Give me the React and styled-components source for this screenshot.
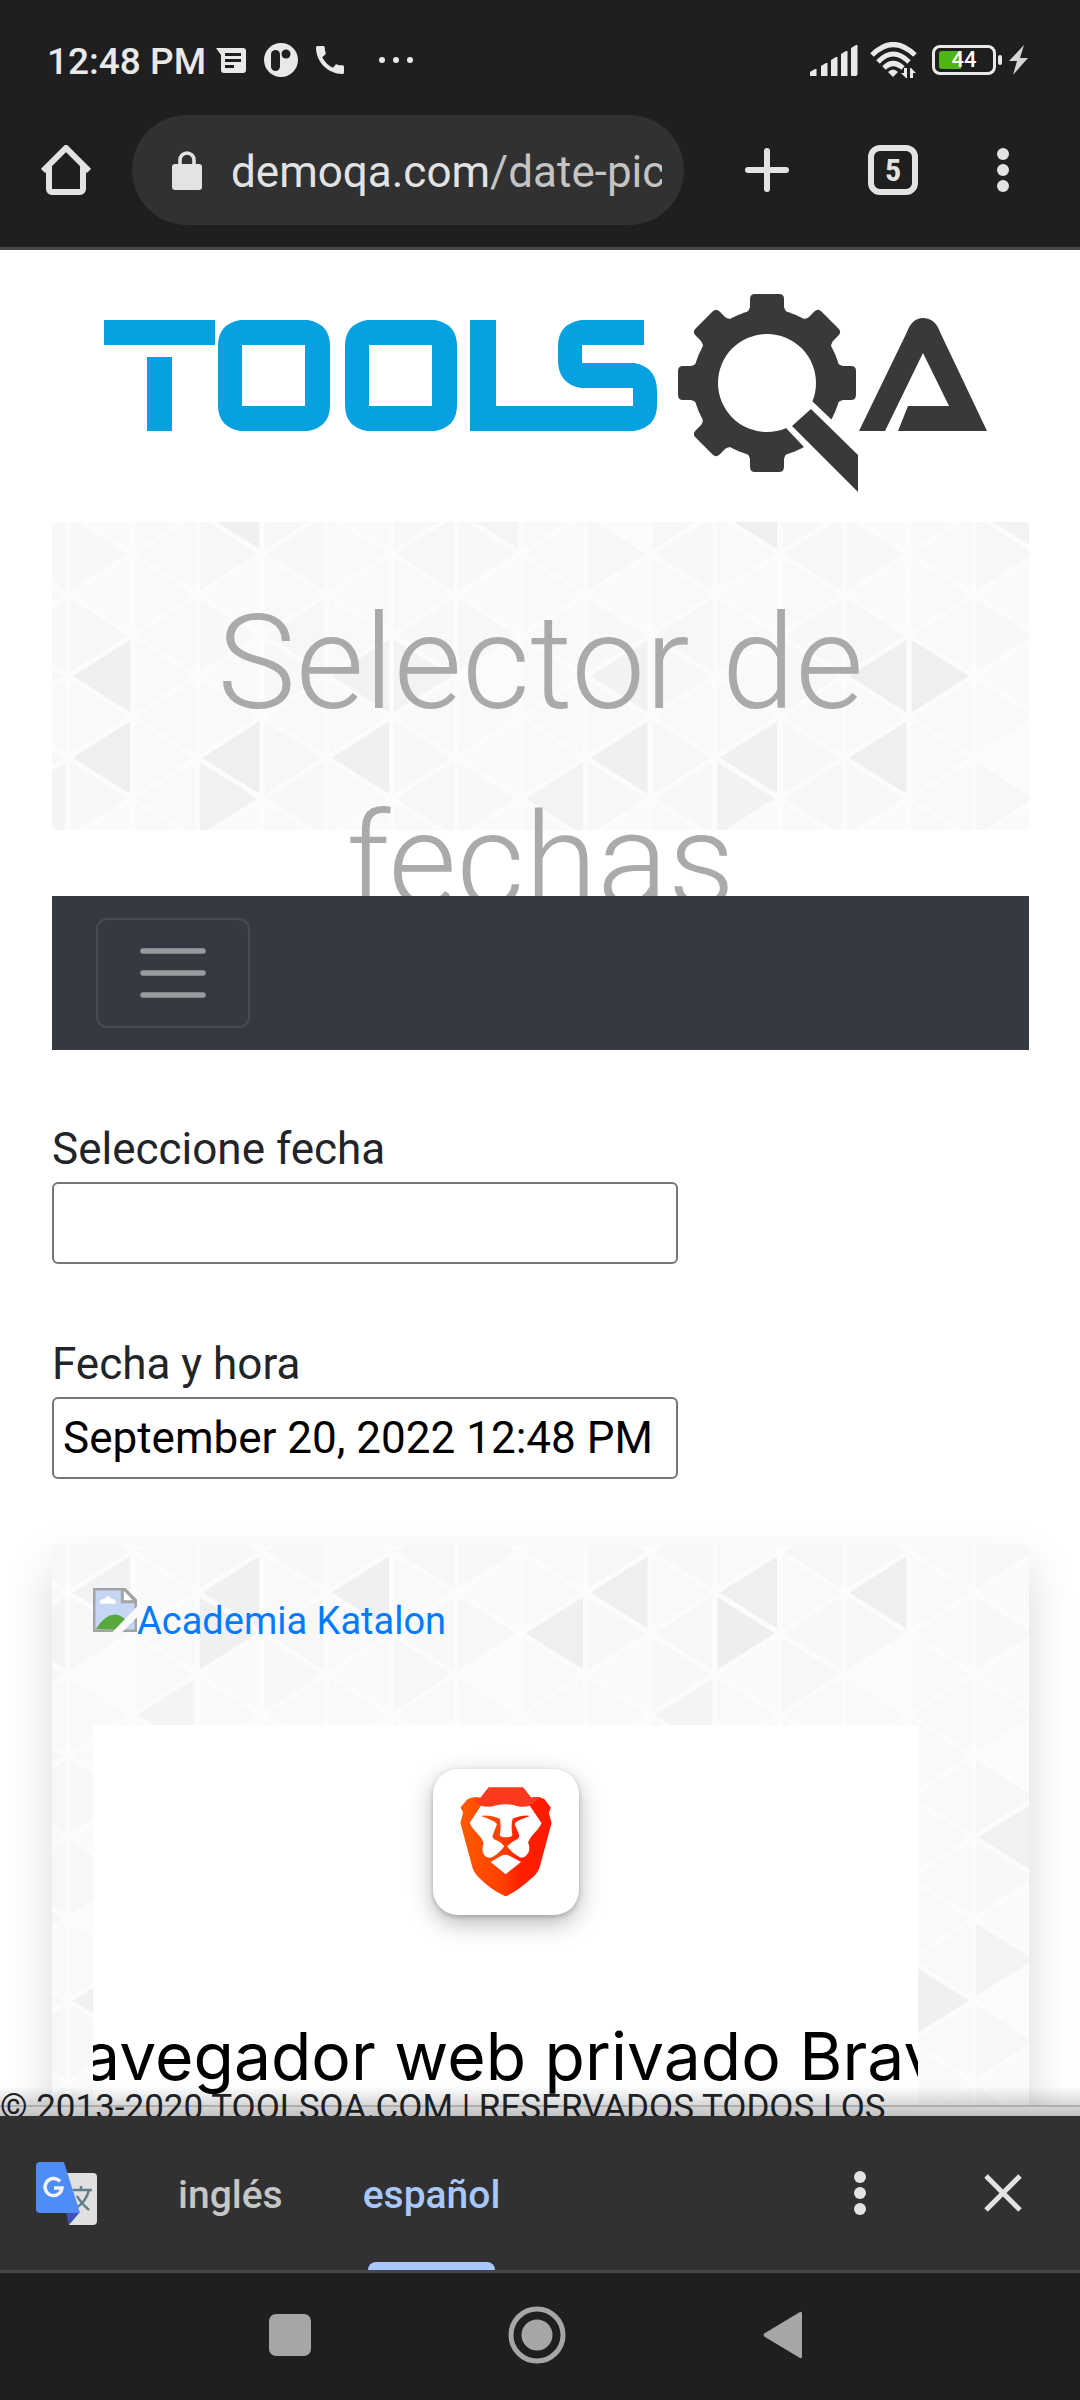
import React, { useState } from "react";
import styled, { createGlobalStyle } from "styled-components";

const GlobalStyle = createGlobalStyle`
  *, *::before, *::after { box-sizing: border-box; }
  body { margin: 0; background: #ffffff; font-family: Roboto, "Liberation Sans", sans-serif; }
  button { font: inherit; color: inherit; background: none; border: 0; padding: 0; cursor: pointer; }
  svg { display: block; flex: none; }
`;

const Screen = styled.div`
  display: flex;
  flex-direction: column;
  height: 100vh;
  overflow: hidden;
`;

/* Browser chrome */

const Chrome = styled.header`
  flex: none;
  background: #1f1f1f;
  color: #e3e3e3;
  border-bottom: 3px solid #474747;
`;

const StatusBar = styled.div`
  display: flex;
  align-items: center;
  justify-content: space-between;
  height: 84px;
  padding: 36px 52px 0 47px;
  color: #e9e9e9;
`;

const StatusGroup = styled.div`
  display: flex;
  align-items: center;
  gap: ${(p) => p.$gap}px;
`;

const Clock = styled.span`
  padding-top: 4px;
  font-size: 37px;
  line-height: 44px;
  font-weight: 500;
  white-space: nowrap;
`;

const BatteryWrap = styled.div`
  display: flex;
  align-items: center;
  gap: 2px;
  margin-left: 3px;
`;

const Battery = styled.div`
  position: relative;
  display: flex;
  align-items: center;
  justify-content: center;
  width: 64px;
  height: 30px;
  border: 3px solid #e9e9e9;
  border-radius: 8px;
  font-size: 22px;
  line-height: 24px;
  font-weight: 500;
  color: #ffffff;
`;

const Charge = styled.div`
  position: absolute;
  left: 4px;
  top: 3px;
  bottom: 3px;
  border-radius: 3px 0 0 3px;
  background: #50b414;
`;

const Percent = styled.span`
  position: relative;
`;

const BatteryTip = styled.div`
  width: 4px;
  height: 10px;
  border-radius: 2px;
  background: #e9e9e9;
`;

const Toolbar = styled.div`
  display: flex;
  align-items: center;
  padding: 31px 71px 22px 41px;
`;

const UrlPill = styled.button`
  flex: 1;
  min-width: 0;
  display: flex;
  align-items: center;
  gap: 29px;
  height: 110px;
  margin-left: 41px;
  padding: 0 22px 0 40px;
  border-radius: 55px;
  background: #313131;
`;

const Url = styled.span`
  flex: 1;
  min-width: 0;
  overflow: hidden;
  padding-top: 4px;
  white-space: nowrap;
  text-align: left;
  font-size: 44px;
  line-height: 56px;
  color: #e3e3e3;
`;

const UrlPath = styled.span`
  color: #c4c4c4;
`;

const ToolbarActions = styled.div`
  display: flex;
  align-items: center;
  gap: 79px;
  margin-left: 61px;
`;

const TabCount = styled.button`
  width: 50px;
  height: 50px;
  border: 6px solid #e3e3e3;
  border-radius: 12px;
  font-family: "Roboto Condensed", Roboto, sans-serif;
  font-size: 32px;
  line-height: 38px;
  font-weight: 700;
`;

/* Web page */

const Viewport = styled.main`
  position: relative;
  flex: 1;
  min-height: 0;
  overflow: hidden;
  background: #ffffff;
  color: #212529;
`;

const Page = styled.div`
  padding: 0 51px 0 52px;
`;

const LogoLink = styled.a`
  display: block;
  svg { width: 100%; height: auto; }
`;

const Hero = styled.section`
  position: relative;
  height: 308px;
  padding: 42px 41px;
`;

const Title = styled.h1`
  position: relative;
  margin: 0;
  font-size: 132px;
  line-height: 198px;
  font-weight: 300;
  text-align: center;
  color: #aaaaaa;
`;

const MeshSvg = styled.svg`
  position: absolute;
  inset: 0;
  width: 100%;
  height: 100%;
`;

const NavBar = styled.nav`
  position: relative;
  display: flex;
  margin-top: 66px;
  padding: 22px 44px;
  background: #353941;
`;

const Toggler = styled.button`
  display: flex;
  align-items: center;
  justify-content: center;
  width: 154px;
  height: 110px;
  border: 2px solid #484c50;
  border-radius: 11px;
`;

const Form = styled.form`
  display: flex;
  flex-direction: column;
  gap: 67px;
  padding: 66px 0;
`;

const Field = styled.div`
  display: flex;
  flex-direction: column;
  align-items: flex-start;
`;

const Label = styled.label`
  font-size: 44px;
  line-height: 66px;
`;

const Input = styled.input`
  width: 626px;
  max-width: 100%;
  height: 82px;
  padding: 2px 9px;
  border: 2px solid #767676;
  border-radius: 6px;
  background: #ffffff;
  font-family: inherit;
  font-size: 44px;
  color: #000000;
`;

const Card = styled.aside`
  position: relative;
  height: 700px;
  padding: 41px;
  box-shadow: 0 22px 44px rgba(0, 0, 0, 0.15);
`;

const CourseLink = styled.a`
  position: relative;
  display: flex;
  align-items: flex-start;
  height: 139px;
  padding-top: 2px;
  font-size: 38px;
  line-height: 46px;
  color: #007bff;
  text-decoration: none;
`;

const CourseText = styled.span`
  margin-top: 10px;
`;

const Ad = styled.a`
  position: relative;
  display: flex;
  flex-direction: column;
  align-items: center;
  width: 825px;
  max-width: 100%;
  height: 480px;
  padding-top: 44px;
  overflow: hidden;
  background: #ffffff;
  color: #000000;
  text-decoration: none;
`;

const AppTile = styled.span`
  flex: none;
  width: 146px;
  height: 146px;
  border-radius: 25px;
  background: #ffffff;
  box-shadow: 0 8px 24px rgba(0, 0, 0, 0.28), 0 2px 5px rgba(0, 0, 0, 0.2);
`;

const AdTitle = styled.span`
  margin-top: 101px;
  font-family: Inter, Roboto, sans-serif;
  font-size: 66px;
  line-height: 80px;
  white-space: nowrap;
`;

const Footer = styled.footer`
  position: absolute;
  left: 0;
  right: 0;
  bottom: 0;
  display: flex;
  align-items: flex-end;
  height: 11px;
  border-top: 2px solid #cfcfcf;
  background: #ffffff;
  font-size: 35px;
  line-height: 16px;
  white-space: nowrap;
`;

const BarShadow = styled.div`
  position: absolute;
  left: 0;
  right: 0;
  bottom: 0;
  height: 30px;
  background: linear-gradient(rgba(0, 0, 0, 0), rgba(0, 0, 0, 0.24));
`;

/* Translate bar */

const TranslateBar = styled.section`
  flex: none;
  display: flex;
  align-items: center;
  height: 154px;
  padding: 0 58px 0 36px;
  background: #313131;
  color: #e3e3e3;
`;

const Languages = styled.div`
  display: flex;
  align-self: stretch;
  flex: 1;
  margin-left: 41px;
`;

const Language = styled.button`
  position: relative;
  padding: 4px 40px 0;
  font-size: 39px;
  line-height: 46px;
  font-weight: 500;
  color: ${(p) => (p.$active ? "#a8c7fa" : "#c4c7c5")};

  &::after {
    content: "";
    display: ${(p) => (p.$active ? "block" : "none")};
    position: absolute;
    left: 45px;
    right: 45px;
    bottom: 0;
    height: 8px;
    border-radius: 8px 8px 0 0;
    background: #a8c7fa;
  }
`;

const BarActions = styled.div`
  display: flex;
  align-items: center;
  gap: 118px;
`;

const SystemNav = styled.nav`
  flex: none;
  display: flex;
  align-items: center;
  justify-content: center;
  gap: 197px;
  height: 130px;
  padding: 0 9px 4px 0;
  border-top: 3px solid #474747;
  background: #1f1f1f;
`;

/* Triangle mesh: strips of equal width, triangles stacked every half side. */
const COL = 64.7;
const HALF = 40.8;

function Mesh({ top, dark }) {
  const tones = ["#fafafa", "#f9f9f9", "#fbfbfb", "#f7f7f7", "#fafafa", "#f8f8f8"];
  const shapes = [];
  for (let c = -1; c < 15; c += 1) {
    for (let j = -1; j < 20; j += 1) {
      const left = 16 + c * COL;
      const right = left + COL;
      const y = top + j * HALF;
      const pointsLeft = (c + j) % 2 === 0;
      const apex = pointsLeft ? left : right;
      const base = pointsLeft ? right : left;
      const tone = dark[`${c},${j}`] || tones[Math.abs(c * 7 + j * 5 + c * j) % tones.length];
      shapes.push(
        <polygon
          key={`${c},${j}`}
          points={`${apex},${y} ${base},${y - HALF} ${base},${y + HALF}`}
          fill={tone}
        />
      );
    }
  }
  return (
    <MeshSvg aria-hidden="true">
      <g stroke="#fcfcfc" strokeWidth="5" strokeLinejoin="round">{shapes}</g>
    </MeshSvg>
  );
}

const heroDark = {
  "0,4": "#f0f0f0", "0,6": "#efefef", "2,6": "#efefef", "2,7": "#f1f1f1", "2,0": "#f0f0f0",
  "4,6": "#f0f0f0", "4,4": "#f2f2f2", "5,4": "#f3f3f3", "7,7": "#f3f3f3", "8,4": "#f2f2f2",
  "8,6": "#f0f0f0", "10,6": "#f0f0f0", "10,7": "#f2f2f2", "10,0": "#efefef", "12,4": "#efefef",
  "12,6": "#efefef", "13,4": "#efefef", "14,0": "#f3f3f3", "6,0": "#f5f5f5", "-1,7": "#f4f4f4",
};

const cardDark = {
  "0,2": "#f2f2f2", "2,2": "#f0f0f0", "2,3": "#f0f0f0", "4,2": "#f0f0f0", "7,3": "#efefef",
  "8,2": "#efefef", "1,5": "#f4f4f4", "10,2": "#efefef", "10,3": "#eeeeee", "12,2": "#efefef",
  "9,5": "#f4f4f4", "14,8": "#f1f1f1", "-1,3": "#f4f4f4", "13,12": "#f0f0f0", "0,12": "#f1f1f1",
  "14,11": "#f3f3f3",
};

/* Drawings */

const ChatIcon = () => (
  <svg width="30" height="25" viewBox="0 0 30 25">
    <path fill="#e9e9e9" fillRule="evenodd" d="M0 0h27a3 3 0 0 1 3 3v19a3 3 0 0 1-3 3H8a3 3 0 0 1-3-3V7zM9 5v3h16V5zm0 6v3h16v-3zm0 6v3h9v-3z" />
  </svg>
);

const AppBadgeIcon = () => (
  <svg width="34" height="34" viewBox="0 0 34 34">
    <circle cx="17" cy="17" r="17" fill="#e9e9e9" />
    <rect x="7" y="7" width="9" height="21" rx="4.500" fill="#1f1f1f" />
    <circle cx="22" cy="11" r="4.500" fill="#1f1f1f" />
  </svg>
);

const PhoneIcon = () => (
  <svg width="28" height="28" viewBox="3 3 18 18">
    <path fill="#e9e9e9" d="M20.010 15.380c-1.230 0-2.420-.2-3.530-.56a.977.977 0 0 0-1.010.24l-1.570 1.970c-2.830-1.350-5.480-3.900-6.890-6.830l1.950-1.660c.27-.28.35-.67.24-1.020-.37-1.110-.56-2.300-.56-3.530 0-.54-.45-.99-.99-.99H4.190C3.650 3 3 3.240 3 3.990 3 13.280 10.730 21 20.010 21c.71 0 .99-.63.99-1.180v-3.450c0-.54-.45-.99-.99-.99z" />
  </svg>
);

const MoreIcon = () => (
  <svg width="36" height="8" viewBox="0 0 36 8">
    {[4, 18, 32].map((x) => <circle key={x} cx={x} cy="4" r="3" fill="#e9e9e9" />)}
  </svg>
);

const SignalIcon = () => (
  <svg width="48" height="31" viewBox="0 0 48 31" fill="#e9e9e9">
    {[[0, 24], [11, 18], [21, 12], [31, 6], [41, 0]].map(([x, y]) => (
      <path key={x} d={`M${x} ${y + 3}l5-3h1.500v29a2 2 0 0 1-2 2H${x + 1}a1 1 0 0 1-1-1z`} />
    ))}
  </svg>
);

const WifiIcon = () => (
  <svg width="47" height="36" viewBox="0 0 47 36">
    <g fill="none" stroke="#e9e9e9" strokeWidth="5">
      <path d="M2 13Q23 -8 45 13" />
      <path d="M8 20Q23 4 39 20" />
      <path d="M14 26Q23 17 33 26" />
    </g>
    <path d="M18 30q5-5 10 0l-5 5z" fill="#e9e9e9" />
    <path d="M37 26v10h-1l-5-5h3v-5zM40 36V26h1l5 5h-3v5z" fill="#e9e9e9" />
  </svg>
);

const BoltIcon = () => (
  <svg width="19" height="30" viewBox="0 0 19 30">
    <path d="M15 0L0 16h8L4 30 19 13h-8z" fill="#d5d5d5" />
  </svg>
);

const HomeIcon = () => (
  <svg width="50" height="50" viewBox="0 0 50 50" fill="none" stroke="#e3e3e3" strokeWidth="6">
    <path d="M2 26L25 3l23 23" />
    <path d="M8 21v23a3 3 0 0 0 3 3h28a3 3 0 0 0 3-3V21" />
  </svg>
);

const LockIcon = () => (
  <svg width="30" height="39" viewBox="0 0 30 39">
    <rect y="13" width="30" height="26" rx="3" fill="#e3e3e3" />
    <path d="M8 15V9a7 7 0 0 1 14 0v6" fill="none" stroke="#e3e3e3" strokeWidth="3.600" />
  </svg>
);

const PlusIcon = () => (
  <svg width="44" height="44" viewBox="0 0 44 44" stroke="#e3e3e3" strokeWidth="6" strokeLinecap="round">
    <path d="M22 3v38M3 22h38" />
  </svg>
);

const DotsIcon = ({ r }) => (
  <svg width={r * 2} height="44" viewBox={`0 0 ${r * 2} 44`} fill="#e3e3e3">
    {[6, 22, 38].map((y) => <circle key={y} cx={r} cy={y} r={r} />)}
  </svg>
);

const CloseIcon = () => (
  <svg width="38" height="38" viewBox="0 0 38 38" stroke="#e3e3e3" strokeWidth="5">
    <path d="M2 2l34 34M36 2L2 36" />
  </svg>
);

const MenuIcon = () => (
  <svg width="66" height="52" viewBox="0 0 66 52" stroke="#999b9f" strokeWidth="5.500" strokeLinecap="round">
    <path d="M3 4h60M3 26h60M3 48h60" />
  </svg>
);

const ToolsQaLogo = () => (
  <svg viewBox="52 250 977 272" role="img" aria-label="ToolsQA">
    <g fill="#06a1e0">
      <path d="M104 320h111v25H104zM147 357h25v74h-25z" />
      <path fillRule="evenodd" d="M240 320h68q22 4 22 26v59q0 22-22 26h-68q-22-4-22-26v-59q0-22 22-26zM242 345v61h63v-61z" />
      <path fillRule="evenodd" d="M367 320h68q22 4 22 26v59q0 22-22 26h-68q-22-4-22-26v-59q0-22 22-26zM369 345v61h63v-61z" />
      <path d="M470 320h26v86h137v-18h-52q-23-4-23-28v-14q0-22 23-26h63v25h-62v18h52q23 4 23 28v14q0 22-23 26H470z" />
    </g>
    <g fill="#393939">
      <circle cx="767" cy="383" r="74" />
      {[0, 45, 90, 180, 225, 270, 315].map((a) => (
        <path
          key={a}
          transform={`rotate(${a} 767 383)`}
          d="M735 319q14-5 15-12v-8q0-5 5-5h24q5 0 5 5v8q1 7 15 12z"
        />
      ))}
    </g>
    <circle cx="767" cy="383" r="49" fill="#ffffff" />
    <path d="M812 401l21 20 40 50-10 50-60-75-17-18z" fill="#ffffff" />
    <path d="M811 409l47 46v37l-66-66z" fill="#393939" />
    <path d="M859 431l48-99q5-14 16-14 12 0 17 14l47 99h-89l10-25h41l-26-53-38 78z" fill="#393939" />
  </svg>
);

const BrokenImageIcon = () => (
  <svg width="44" height="44" viewBox="0 0 45 45">
    <path d="M1 1h31l12 12v31H1z" fill="#c5d7f5" stroke="#a3a3a3" strokeWidth="3" />
    <path d="M7 15q0-4 5-4 3-5 7 0 5 0 4 5H7z" fill="#ffffff" />
    <path d="M3 42q17-27 35-5l-8 6z" fill="#58a83b" />
    <path d="M30 1v13h14L32 1z" fill="#ffffff" stroke="#a3a3a3" strokeWidth="3" />
    <path d="M20 45L45 19v11L30 45z" fill="#fafafa" />
  </svg>
);

const LionIcon = () => (
  <svg viewBox="24 27 436 436" width="146" height="146" role="img" aria-label="Brave">
    <defs>
      <linearGradient id="mane" x1="0" x2="1">
        <stop offset="0" stopColor="#ff5a00" />
        <stop offset="0.450" stopColor="#ff4000" />
        <stop offset="0.650" stopColor="#ff2000" />
        <stop offset="1" stopColor="#ff1a00" />
      </linearGradient>
    </defs>
    <path fill="url(#mane)" d="M190 82h103l24 31q22-6 40 4l19 26-6 15 8 30-34 127q-5 21-22 35-40 36-70 52-9 8-18 2-36-16-74-54-15-15-19-32L106 188l8-32-8-14 20-24q20-12 40-5z" />
    <path fill="#fb3a20" d="M190 82h103l24 31q16-4 28-1l-33 25q-20 5-40-2-30-8-60 1-20 6-43 1l-25-17 22-7z" />
    <path fill="#ffffff" d="M167 137q24 6 45-1 30-8 60 1 20 5 41 0l35 51q-4 12-20 29-15 15-20 29 8 24-2 35-10 15-24 9-22-12-37-32 14-14 31-22 7-4 5-13l-13-31q0-10 46-25-20-4-52 8-6 22-1 48-2 8-19 8-16 0-19-8 6-26 0-48-34-13-56-8 46 16 48 25l-12 31q-4 9 4 14 20 8 30 21-14 20-35 32-16 6-26-8-8-12-1-34-5-16-20-30-18-18-21-31z" />
    <path fill="#ffffff" d="M196 305l36-21q10-3 20 2l35 19-46 36z" />
  </svg>
);

const TranslateIcon = () => (
  <svg width="61" height="63" viewBox="0 0 61 63">
    <path d="M27 11h30a4 4 0 0 1 4 4v44a4 4 0 0 1-4 4H33z" fill="#e0e0e0" />
    <path d="M37 28h19M45 24v5M53 28q-3 12-13 18M41 34q4 7 12 14" fill="none" stroke="#607d8b" strokeWidth="2.500" />
    <path d="M30 50h14L33 63z" fill="#3f51b5" />
    <path d="M4 0h24l16 51H4a4 4 0 0 1-4-4V4a4 4 0 0 1 4-4z" fill="#4e8df5" />
    <path d="M24 19.500a8.500 8.500 0 1 0 2 6.500h-8" fill="none" stroke="#f2f2f2" strokeWidth="3.400" />
  </svg>
);

const RecentsIcon = () => (
  <svg width="42" height="42"><rect width="42" height="42" rx="7" fill="#a6a6a6" /></svg>
);

const CircleIcon = () => (
  <svg width="58" height="58" viewBox="0 0 58 58">
    <circle cx="29" cy="29" r="26" fill="none" stroke="#a6a6a6" strokeWidth="5" />
    <circle cx="29" cy="29" r="15.500" fill="#a6a6a6" />
  </svg>
);

const BackIcon = () => (
  <svg width="39" height="48" viewBox="0 0 39 48">
    <path d="M37 1q2-1 2 2v42q0 3-2 2L2 26q-3-2 0-4z" fill="#a6a6a6" />
  </svg>
);

export default function App() {
  const [date, setDate] = useState("");
  const [dateTime, setDateTime] = useState("September 20, 2022 12:48 PM");
  const [language, setLanguage] = useState("español");
  const charge = 44;

  return (
    <Screen>
      <GlobalStyle />
      <Chrome>
        <StatusBar>
          <StatusGroup $gap={18}>
            <StatusGroup $gap={10}>
              <Clock>12:48 PM</Clock>
              <ChatIcon />
            </StatusGroup>
            <AppBadgeIcon />
            <StatusGroup $gap={34}>
              <PhoneIcon />
              <MoreIcon />
            </StatusGroup>
          </StatusGroup>
          <StatusGroup $gap={12}>
            <SignalIcon />
            <WifiIcon />
            <StatusGroup $gap={7}>
              <BatteryWrap>
                <Battery>
                  <Charge style={{ width: `${charge * 0.5}px` }} />
                  <Percent>{charge}</Percent>
                </Battery>
                <BatteryTip />
              </BatteryWrap>
              <BoltIcon />
            </StatusGroup>
          </StatusGroup>
        </StatusBar>
        <Toolbar>
          <button type="button" aria-label="Inicio"><HomeIcon /></button>
          <UrlPill type="button">
            <LockIcon />
            <Url>demoqa.com<UrlPath>/date-picker</UrlPath></Url>
          </UrlPill>
          <ToolbarActions>
            <button type="button" aria-label="Nueva pestaña"><PlusIcon /></button>
            <TabCount type="button">5</TabCount>
            <button type="button" aria-label="Más opciones"><DotsIcon r={6} /></button>
          </ToolbarActions>
        </Toolbar>
      </Chrome>

      <Viewport>
        <Page>
          <LogoLink href="#inicio"><ToolsQaLogo /></LogoLink>
          <Hero>
            <Mesh top={-9} dark={heroDark} />
            <Title>Selector de fechas</Title>
          </Hero>
          <NavBar>
            <Toggler type="button" aria-label="Menú"><MenuIcon /></Toggler>
          </NavBar>
          <Form>
            <Field>
              <Label htmlFor="date">Seleccione fecha</Label>
              <Input id="date" type="text" value={date} onChange={(e) => setDate(e.target.value)} />
            </Field>
            <Field>
              <Label htmlFor="dateTime">Fecha y hora</Label>
              <Input id="dateTime" type="text" value={dateTime} onChange={(e) => setDateTime(e.target.value)} />
            </Field>
          </Form>
          <Card>
            <Mesh top={-34} dark={cardDark} />
            <CourseLink href="#katalon">
              <BrokenImageIcon />
              <CourseText>Academia Katalon</CourseText>
            </CourseLink>
            <Ad href="#brave">
              <AppTile><LionIcon /></AppTile>
              <AdTitle>Navegador web privado Brave</AdTitle>
            </Ad>
          </Card>
        </Page>
        <Footer>© 2013-2020 TOOLSQA.COM | RESERVADOS TODOS LOS</Footer>
        <BarShadow />
      </Viewport>

      <TranslateBar>
        <TranslateIcon />
        <Languages role="tablist">
          {["inglés", "español"].map((name) => (
            <Language
              key={name}
              type="button"
              role="tab"
              aria-selected={language === name}
              $active={language === name}
              onClick={() => setLanguage(name)}
            >
              {name}
            </Language>
          ))}
        </Languages>
        <BarActions>
          <button type="button" aria-label="Opciones de traducción"><DotsIcon r={6} /></button>
          <button type="button" aria-label="Cerrar"><CloseIcon /></button>
        </BarActions>
      </TranslateBar>
      <SystemNav>
        <button type="button" aria-label="Recientes"><RecentsIcon /></button>
        <button type="button" aria-label="Pantalla principal"><CircleIcon /></button>
        <button type="button" aria-label="Atrás"><BackIcon /></button>
      </SystemNav>
    </Screen>
  );
}
